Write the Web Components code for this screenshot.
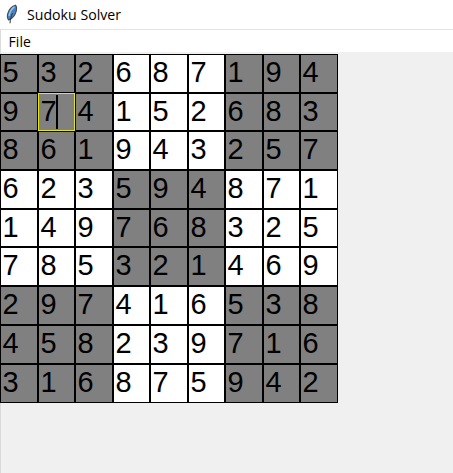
<!DOCTYPE html>
<html lang="en">
<head>
<meta charset="utf-8">
<title>Sudoku Solver</title>
<style>
html,body{margin:0;height:100%;overflow:hidden;background:#f0f0f0}
</style>
</head>
<body>
<app-window>
  <title-bar>Sudoku Solver</title-bar>
  <menu-bar>File</menu-bar>
  <sudoku-board values="532687194974152683861943257623594871149768325785321469297416538458239716316875942" focus-index="10"></sudoku-board>
</app-window>
<script>
class AppWindow extends HTMLElement{
  constructor(){
    super();
    this.attachShadow({mode:'open'}).innerHTML=`<style>
      :host{display:flex;flex-direction:column;align-items:stretch;height:473px;width:453px;background:linear-gradient(90deg,#d9d9d9 1px,#f0f0f0 1px)}
    </style><slot></slot>`;
  }
}
class TitleBar extends HTMLElement{
  constructor(){
    super();
    this.attachShadow({mode:'open'}).innerHTML=`<style>
      :host{display:flex;align-items:center;box-sizing:border-box;height:29px;padding:0 0 0 5px;gap:7px;background:#fff;color:#000;font:15px "Open Sans","Noto Sans",sans-serif}
      svg{flex:none;display:block;margin-top:-1px}
      span{display:block;line-height:20px;margin-top:-1px;white-space:nowrap;transform:scaleX(.943);transform-origin:0 50%}
    </style>
    <svg width="15" height="21" viewBox="0 0 15 21">
      <path d="M10.5 1.2C7.5 1.8 4.2 5.2 2.9 9.2 2 12 2.3 14.8 3.8 16 6.5 14.7 9.9 11.7 11.1 7.6 11.8 5 11.6 2.3 10.5 1.2Z" fill="#4684c4" stroke="#414852" stroke-width="1.1"/>
      <path d="M9.5 2.8C6.8 4.6 4.6 8 4 12" fill="none" stroke="#9cc4e8" stroke-width="1.4"/>
      <path d="M7.5 9.2C6.2 12 5.3 15 5 19.3" fill="none" stroke="#303236" stroke-width="1"/>
    </svg><span><slot></slot></span>`;
  }
}
class MenuBar extends HTMLElement{
  constructor(){
    super();
    this.attachShadow({mode:'open'}).innerHTML=`<style>
      :host{display:flex;align-items:center;box-sizing:border-box;height:25px;padding:0 0 1px 7.5px;border-top:1px solid #e3e3e3;border-left:1px solid #dcdcdc;background:linear-gradient(#fff 22px,#f0f0f0 22px);color:#000;font:14px "Open Sans","Noto Sans",sans-serif}
      span{display:block;line-height:20px;letter-spacing:.1px}
    </style><span><slot></slot></span>`;
  }
}
class SudokuCell extends HTMLElement{
  constructor(){
    super();
    this.attachShadow({mode:'open'}).innerHTML=`<style>
      :host{display:flex;align-items:center;position:relative;box-sizing:border-box;min-width:0;min-height:0;border:1px solid #000;padding-left:1.4px;background:#fff;color:#000}
      :host([shaded]){background:#808080}
      span{font:29px/34px "Liberation Sans",Arial,sans-serif;margin-top:-3px;transform:scaleY(1.03)}
      i{display:none;width:2px;height:34px;margin-left:-1px;background:#000}
      :host([focused]) i{display:block}
      :host([focused])::after{content:"";position:absolute;inset:-1px;border:1px solid #e8e800}
    </style><span><slot></slot></span><i></i>`;
  }
}
class SudokuBoard extends HTMLElement{
  constructor(){
    super();
    this.attachShadow({mode:'open'}).innerHTML=`<style>
      :host{display:grid;width:338px;height:349px;grid-template-columns:38px 37px 38px 37px 38px 37px 38px 37px 38px;grid-template-rows:39px 38px 39px 39px 38px 39px 39px 39px 39px;background:#000}
    </style>`;
  }
  connectedCallback(){
    const focus=Number(this.getAttribute('focus-index'));
    [...this.getAttribute('values')].forEach((digit,i)=>{
      const cell=document.createElement('sudoku-cell');
      const block=Math.floor(i/27)+Math.floor(i%9/3);
      if(block%2===0)cell.setAttribute('shaded','');
      if(i===focus)cell.setAttribute('focused','');
      cell.textContent=digit;
      this.shadowRoot.append(cell);
    });
  }
}
customElements.define('app-window',AppWindow);
customElements.define('title-bar',TitleBar);
customElements.define('menu-bar',MenuBar);
customElements.define('sudoku-cell',SudokuCell);
customElements.define('sudoku-board',SudokuBoard);
</script>
</body>
</html>
